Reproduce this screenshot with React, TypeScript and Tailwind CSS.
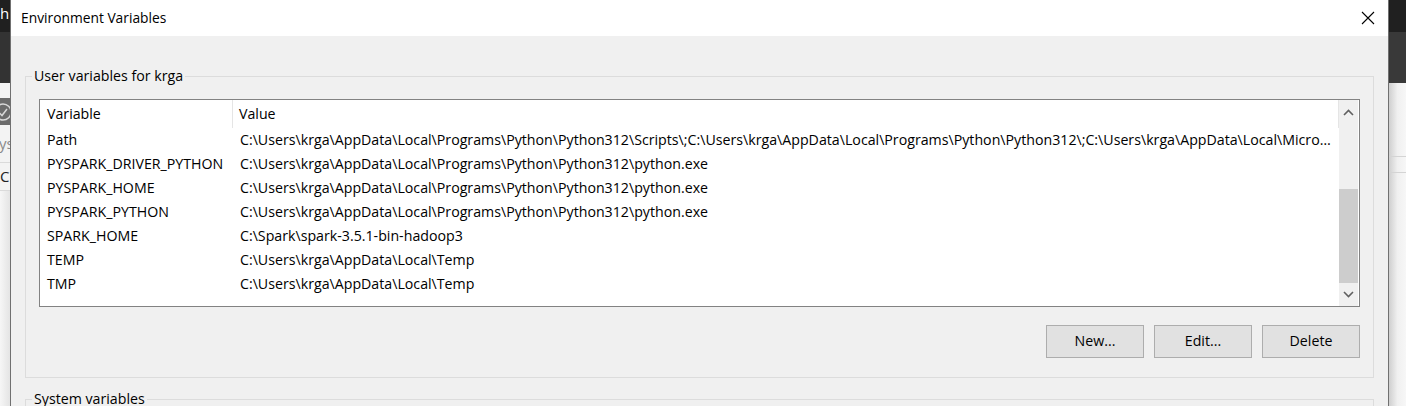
import React from "react";

const rows: [string, string][] = [
  [
    "Path",
    "C:\\Users\\krga\\AppData\\Local\\Programs\\Python\\Python312\\Scripts\\;C:\\Users\\krga\\AppData\\Local\\Programs\\Python\\Python312\\;C:\\Users\\krga\\AppData\\Local\\Microsoft\\WindowsApps;",
  ],
  ["PYSPARK_DRIVER_PYTHON", "C:\\Users\\krga\\AppData\\Local\\Programs\\Python\\Python312\\python.exe"],
  ["PYSPARK_HOME", "C:\\Users\\krga\\AppData\\Local\\Programs\\Python\\Python312\\python.exe"],
  ["PYSPARK_PYTHON", "C:\\Users\\krga\\AppData\\Local\\Programs\\Python\\Python312\\python.exe"],
  ["SPARK_HOME", "C:\\Spark\\spark-3.5.1-bin-hadoop3"],
  ["TEMP", "C:\\Users\\krga\\AppData\\Local\\Temp"],
  ["TMP", "C:\\Users\\krga\\AppData\\Local\\Temp"],
];

function LeftStrip() {
  return (
    <div className="flex w-[10px] shrink-0 flex-col overflow-hidden">
      <div className="flex h-[32px] items-center bg-[#202020] text-[15px] leading-none text-white">
        <span className="-mt-[5px]">h</span>
      </div>
      <div className="h-[51px] bg-[#333333]" />
      <div className="h-[15px] bg-[#f3f3f3]" />
      <div className="flex h-[27px] items-center bg-[#6b6b6b]">
        <svg width="20" height="20" viewBox="0 0 20 20" className="-ml-[7px] shrink-0">
          <circle cx="10" cy="10" r="8" fill="none" stroke="#d8d8d8" strokeWidth="1.5" />
          <path d="M6 10.5 L9 13.5 L14 7" fill="none" stroke="#d8d8d8" strokeWidth="1.5" />
        </svg>
      </div>
      <div className="flex h-[37px] items-center bg-[#f3f3f3] text-[15px] leading-none text-[#8a8a8a]">
        <span className="-ml-[1px]">ys</span>
      </div>
      <div className="h-px bg-[#dadada]" />
      <div className="flex h-[27px] items-center bg-[#f3f3f3] text-[15px] leading-none text-[#222]">
        <span>C</span>
      </div>
      <div className="h-px bg-[#dadada]" />
      <div className="flex-1 bg-gradient-to-r from-[#f6f6f6] to-[#e4e4e4]" />
    </div>
  );
}

function RightStrip() {
  return (
    <div className="flex flex-1 flex-col overflow-hidden">
      <div className="h-[32px] bg-[#202020]" />
      <div className="h-[51px] bg-[#393939]" />
      <div className="flex flex-1 flex-col bg-gradient-to-r from-[#cfcfcf] via-[#f0f0f0] to-[#f7f7f7]">
        <div className="h-[73px]" />
        <div className="h-px bg-[#d4d4d4]" />
        <div className="h-[15px]" />
        <div className="h-px bg-[#d4d4d4]" />
      </div>
    </div>
  );
}

function Chevron({ up }: { up?: boolean }) {
  return (
    <svg width="11" height="7" viewBox="0 0 11 7">
      <path
        d={up ? "M1 6 L5.5 1.5 L10 6" : "M1 1 L5.5 5.5 L10 1"}
        fill="none"
        stroke="#606060"
        strokeWidth="1.6"
      />
    </svg>
  );
}

function Button({ label }: { label: string }) {
  return (
    <button className="flex h-[33px] w-[98px] items-center justify-center border border-[#adadad] bg-[#e1e1e1] text-[14.2px] leading-none text-black">
      {label}
    </button>
  );
}

export default function App() {
  return (
    <div className="flex h-[406px] w-[1406px] overflow-hidden bg-[#f0f0f0] font-['Open_Sans',sans-serif] text-black">
      <LeftStrip />
      <div className="flex w-[1379px] shrink-0 flex-col border-x border-[#707070] bg-[#f0f0f0]">
        {/* title bar */}
        <div className="flex h-[36px] shrink-0 items-center justify-between bg-white pl-[10px] pr-[13px]">
          <span className="text-[13.8px] leading-none">Environment Variables</span>
          <svg width="14" height="14" viewBox="0 0 14 14">
            <path d="M1 1 L13 13 M13 1 L1 13" stroke="#000" strokeWidth="1.1" />
          </svg>
        </div>

        {/* user variables */}
        <fieldset className="mx-[14px] mt-[30px] min-w-0 border border-[#dcdcdc] px-[13px] pb-[19px] pt-[13px]">
          <legend className="-ml-[7px] px-[2px] text-[14.2px] leading-[20px]">User variables for krga</legend>
          <div className="flex h-[208px] w-full border border-[#828282] bg-white">
            <div className="flex min-w-0 flex-1 flex-col">
              <div className="flex h-[28px] shrink-0 items-stretch text-[14.2px]">
                <div className="flex w-[193px] shrink-0 items-center border-r border-[#e5e5e5] pl-[7px]">Variable</div>
                <div className="flex min-w-0 flex-1 items-center border-r border-[#e5e5e5] pl-[6px]">Value</div>
              </div>
              {rows.map(([name, value]) => (
                <div key={name} className="flex h-[24px] shrink-0 items-center text-[14.2px]">
                  <div className="w-[194px] shrink-0 overflow-hidden whitespace-nowrap pl-[7px]">{name}</div>
                  <div className="min-w-0 flex-1 overflow-hidden text-ellipsis whitespace-nowrap pl-[6px] pr-[8px]">
                    {value}
                  </div>
                </div>
              ))}
            </div>
            <div className="mr-px flex w-[19px] shrink-0 flex-col items-center bg-[#f0f0f0]">
              <div className="flex h-[24px] w-full items-center justify-center">
                <Chevron up />
              </div>
              <div className="h-[65px]" />
              <div className="h-[94px] w-full bg-[#cdcdcd]" />
              <div className="flex flex-1 items-center justify-center">
                <Chevron />
              </div>
            </div>
          </div>
          <div className="mt-[18px] flex justify-end gap-[10px]">
            <Button label="New..." />
            <Button label="Edit..." />
            <Button label="Delete" />
          </div>
        </fieldset>

        {/* system variables */}
        <fieldset className="mx-[14px] mt-[11px] h-[60px] min-w-0 shrink-0 border border-[#dcdcdc] px-[13px]">
          <legend className="-ml-[7px] px-[2px] text-[14.2px] leading-[20px]">System variables</legend>
        </fieldset>
      </div>
      <RightStrip />
    </div>
  );
}
